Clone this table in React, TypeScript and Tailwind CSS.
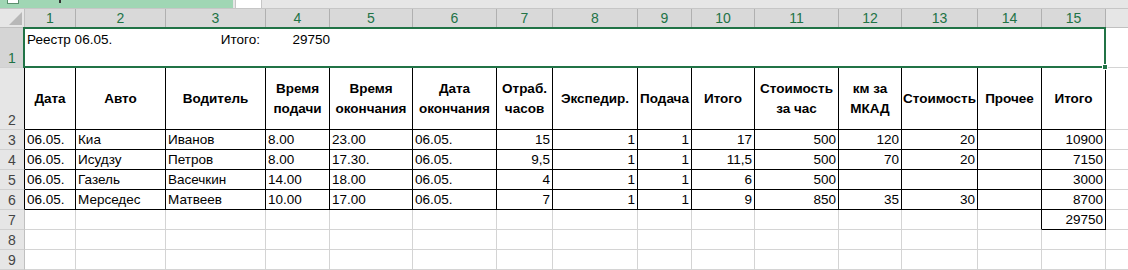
import React from 'react'

const COLS = [51, 90, 100, 64, 83, 84, 56, 85, 54, 63, 84, 63, 76, 64, 64]

const headers = [
  ['Дата'],
  ['Авто'],
  ['Водитель'],
  ['Время', 'подачи'],
  ['Время', 'окончания'],
  ['Дата', 'окончания'],
  ['Отраб.', 'часов'],
  ['Экспедир.'],
  ['Подача'],
  ['Итого'],
  ['Стоимость', 'за час'],
  ['км за', 'МКАД'],
  ['Стоимость'],
  ['Прочее'],
  ['Итого'],
]

const rows = [
  ['06.05.', 'Киа', 'Иванов', '8.00', '23.00', '06.05.', '15', '1', '1', '17', '500', '120', '20', '', '10900'],
  ['06.05.', 'Исудзу', 'Петров', '8.00', '17.30.', '06.05.', '9,5', '1', '1', '11,5', '500', '70', '20', '', '7150'],
  ['06.05.', 'Газель', 'Васечкин', '14.00', '18.00', '06.05.', '4', '1', '1', '6', '500', '', '', '', '3000'],
  ['06.05.', 'Мерседес', 'Матвеев', '10.00', '17.00', '06.05.', '7', '1', '1', '9', '850', '35', '30', '', '8700'],
]

const font = { fontFamily: '"Liberation Sans", Arial, sans-serif' }

function RowHead({ n, black, selected }: { n: number; black?: boolean; selected?: boolean }) {
  return (
    <div
      className={
        'flex items-end justify-center border-b border-r border-b-[#d0d0d0] text-[14px] leading-[18px] ' +
        (selected ? 'bg-[#d5d5d5] text-[#217346] ' : 'bg-[#e6e6e6] text-[#444] ') +
        (black ? 'border-r-black' : 'border-r-[#c0c0c0]')
      }
    >
      {n}
    </div>
  )
}

export default function App() {
  return (
    <div className="w-[1128px] h-[270px] overflow-hidden bg-white text-black" style={font}>
      {/* sheet tab strip */}
      <div className="flex h-[9px] border-b border-[#c6c6c6] bg-[#e6e6e6]">
        <div className="relative w-[233px] bg-[#a0d6b4]">
          <div className="absolute left-[7px] top-0 h-[4px] w-[12px] border border-t-0 border-[#5b8f6d] bg-white" />
          <div className="absolute left-[59px] top-0 h-[3px] w-[2px] bg-[#333]" />
        </div>
        <div className="ml-[2px] w-[27px] border-x border-[#c6c6c6] bg-white" />
      </div>

      <div className="grid grid-cols-[25px_51px_90px_100px_64px_83px_84px_56px_85px_54px_63px_84px_63px_76px_64px_64px_1fr] grid-rows-[19px_40px_62px_repeat(7,20px)]">
        {/* column headers */}
        <div className="flex items-end justify-end border-b border-r border-[#c0c0c0] bg-[#e6e6e6] p-[2px]">
          <svg width="13" height="13" viewBox="0 0 13 13">
            <polygon points="13,0 13,13 0,13" fill="#b8b8b8" />
          </svg>
        </div>
        {COLS.map((_, i) => (
          <div
            key={'h' + i}
            className="flex items-center justify-center border-b border-r border-b-[#217346] border-r-[#b0b0b0] bg-[#d9d9d9] text-[14px] text-[#217346]"
          >
            {i + 1}
          </div>
        ))}
        <div className="border-b border-[#c0c0c0] bg-[#e6e6e6]" />

        {/* row 1 */}
        <RowHead n={1} selected />
        <div className="relative col-span-15 -ml-[2px] -mt-px border-2 border-[#217346] pt-[3px] text-[13.5px] leading-[16px]">
          <div className="grid grid-cols-[52px_90px_100px_64px]">
            <div className="whitespace-nowrap pl-[2px]">Реестр 06.05.</div>
            <div />
            <div className="pr-[7px] text-right">Итого:</div>
            <div className="pr-[1px] text-right">29750</div>
          </div>
          <div className="absolute -bottom-[4px] -right-[4px] h-[6px] w-[6px] border border-white bg-[#217346]" />
        </div>
        <div className="border-b border-[#d4d4d4]" />

        {/* row 2 headers */}
        <RowHead n={2} black />
        {headers.map((lines, i) => (
          <div
            key={'c' + i}
            className="flex flex-col items-center justify-center border-b border-r border-black text-center text-[13.5px] font-bold leading-[20px]"
          >
            {lines.map((l) => (
              <span key={l} className="whitespace-nowrap">
                {l}
              </span>
            ))}
          </div>
        ))}
        <div className="border-b border-[#d4d4d4]" />

        {/* data rows */}
        {rows.map((r, ri) => (
          <React.Fragment key={'r' + ri}>
            <RowHead n={ri + 3} black />
            {r.map((v, ci) => (
              <div
                key={ci}
                className={
                  'overflow-hidden whitespace-nowrap border-b border-r border-black px-[2px] text-[13.5px] leading-[19px] ' +
                  (ci < 6 ? 'text-left' : 'text-right')
                }
              >
                {v}
              </div>
            ))}
            <div className="border-b border-[#d4d4d4]" />
          </React.Fragment>
        ))}

        {/* row 7 */}
        <RowHead n={7} />
        {COLS.map((_, ci) => (
          <div
            key={'s' + ci}
            className={
              'border-b border-r px-[2px] text-right text-[13.5px] leading-[19px] ' +
              (ci === 13 ? 'border-b-[#d4d4d4] border-r-black' : ci === 14 ? 'border-black' : 'border-[#d4d4d4]')
            }
          >
            {ci === 14 ? '29750' : ''}
          </div>
        ))}
        <div className="border-b border-[#d4d4d4]" />

        {/* rows 8-9 */}
        {[8, 9].map((n) => (
          <React.Fragment key={'e' + n}>
            <RowHead n={n} />
            {COLS.map((_, ci) => (
              <div key={ci} className="border-b border-r border-[#d4d4d4]" />
            ))}
            <div className="border-b border-[#d4d4d4]" />
          </React.Fragment>
        ))}
      </div>
    </div>
  )
}
